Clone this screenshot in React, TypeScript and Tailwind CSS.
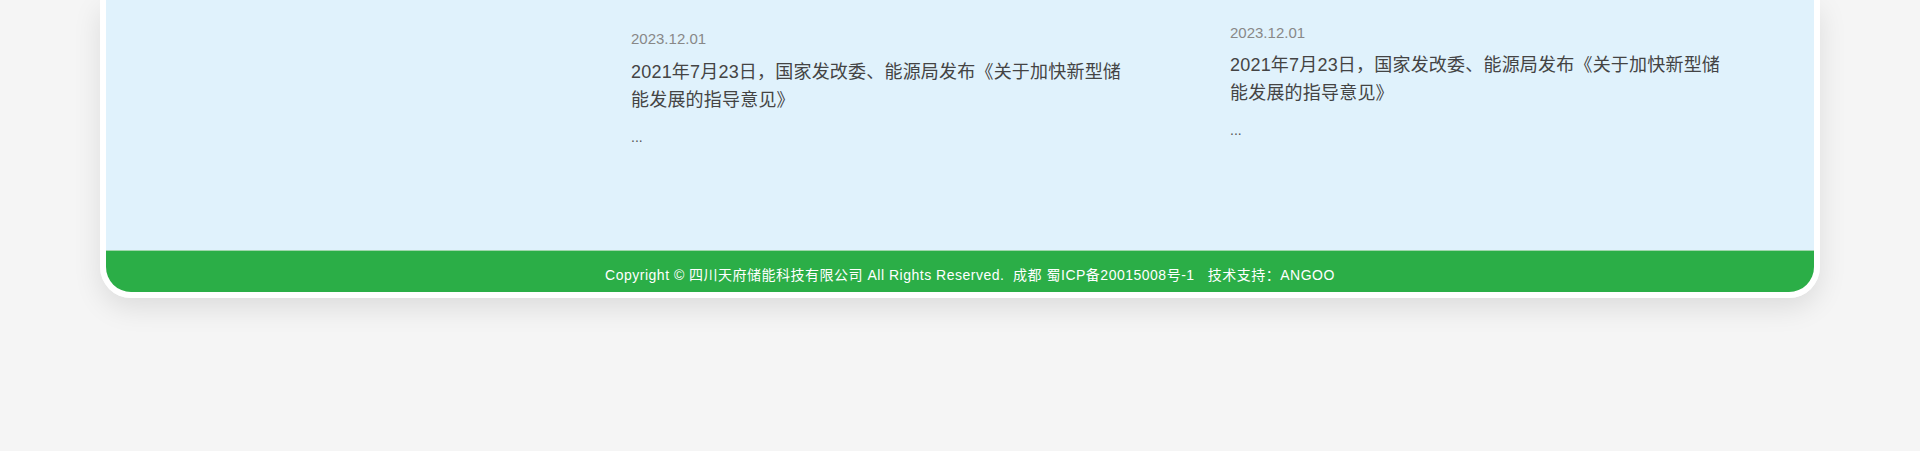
import React from "react";

const font = { fontFamily: "'Liberation Sans', 'Noto Sans CJK SC', sans-serif" };

interface NewsItem {
  date: string;
  title: string;
}

const news: NewsItem[] = [
  { date: "2023.12.01", title: "2021年7月23日，国家发改委、能源局发布《关于加快新型储能发展的指导意见》" },
  { date: "2023.12.01", title: "2021年7月23日，国家发改委、能源局发布《关于加快新型储能发展的指导意见》" },
];

function NewsCard({ item, offset }: { item: NewsItem; offset: "left" | "right" }) {
  return (
    <div className={offset === "left" ? "w-[500px] pt-[29px]" : "w-[500px] pt-[23px]"}>
      <p className="text-[15px] leading-[20px] text-[#888888]">{item.date}</p>
      <p
        className={
          offset === "left"
            ? "mt-[9px] text-[18px] leading-[28px] tracking-[0.2px] text-[#444444]"
            : "mt-[8px] text-[18px] leading-[28px] tracking-[0.2px] text-[#444444]"
        }
      >
        {item.title}
      </p>
      <p className="mt-[11px] text-[14px] leading-[24px] text-[#555555]">...</p>
    </div>
  );
}

export default function App() {
  return (
    <div className="w-full h-[451px] bg-[#f5f5f5] px-[100px]" style={font}>
      <div className="border-x-[6px] border-b-[6px] border-white rounded-b-[31px] overflow-hidden shadow-[0_10px_28px_rgba(0,0,0,0.10)]">
        {/* news list */}
        <div className="h-[250px] bg-[#e0f2fc] flex items-start pl-[525px] gap-[99px]">
          <NewsCard item={news[0]} offset="left" />
          <NewsCard item={news[1]} offset="right" />
        </div>

        {/* footer */}
        <div className="h-[42px] bg-[#2bae47] border-t border-[#9fd6ab] flex items-center justify-center pl-[20px] pt-[6px]">
          <p className="text-[14px] leading-[20px] tracking-[0.5px] text-white whitespace-pre">
            Copyright © 四川天府储能科技有限公司 All Rights Reserved.  成都 蜀ICP备20015008号-1   技术支持：ANGOO
          </p>
        </div>
      </div>
    </div>
  );
}
